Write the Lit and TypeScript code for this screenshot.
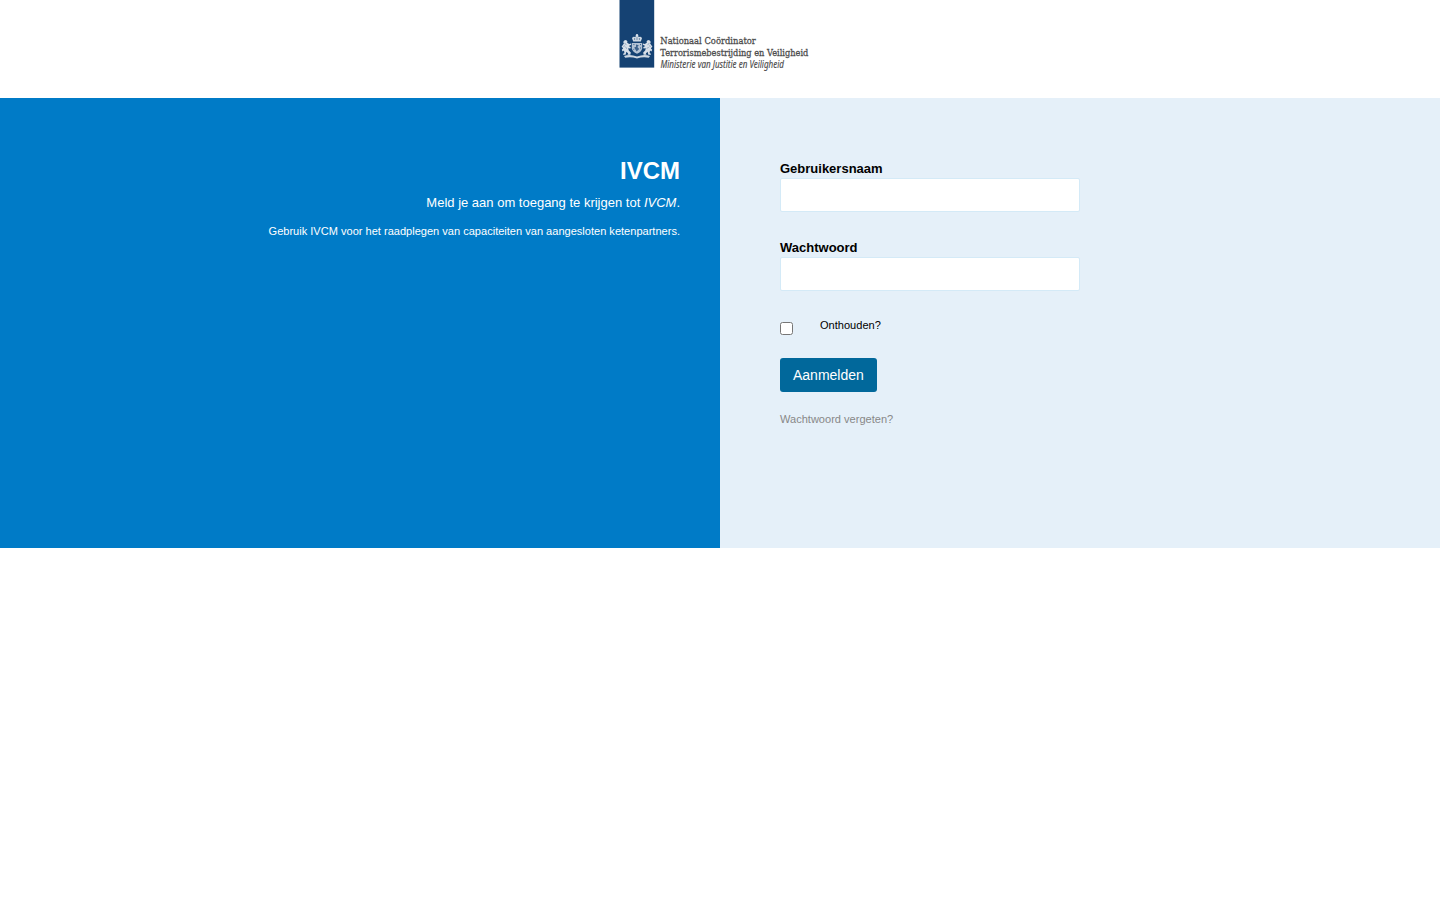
import { LitElement, html, css, svg } from "lit";
import { customElement } from "lit/decorators.js";

const lion = svg`
  <path d="M3.6 45.2 L4.9 43.6 L4.2 42 L5.2 40.6 L7 40 L8.4 41.2 L8.2 42.8 L10.2 44 L12 43.4 L12.2 44.8 L9.8 46 L11.8 47.2 L11.4 48.6 L9.2 48.2 L9.8 50.6 L11.8 52.6 L11.4 54.8 L8.4 54.8 L9.2 53.4 L7.4 51.8 L6.6 54.8 L4 54.8 L4.4 53.6 L5.4 53 L5 50.6 L3.6 51.6 L2.8 49.8 L4.2 48.2 L2.6 46.8 Z"
    fill="#eef2f6" fill-opacity=".9"/>
  <path d="M5.6 43.4 L7.4 44.6 M6.4 47 L8 48.6 M4.4 46.4 L5.8 45.8" stroke="#154273" stroke-width=".6" opacity=".7"/>`;

@customElement("ncv-logo")
export class NcvLogo extends LitElement {
  static styles = css`
    :host { display: block; width: 202px; height: 84px; }
    svg { display: block; overflow: visible; }
    text { font-family: "DejaVu Serif", serif; font-size: 9.8px; fill: #4c4c4c; stroke: #4c4c4c; stroke-width: .3px; }
    .ministry { font-family: "Noto Sans", sans-serif; font-size: 10px; font-style: italic; stroke-width: .15px; }
  `;
  render() {
    return html`<svg width="202" height="84" viewBox="0 0 202 84" role="img" aria-label="Nationaal Coördinator Terrorismebestrijding en Veiligheid">
      <rect x=".5" y="0" width="34.7" height="67.6" fill="#154273"/>
      <g>
        <circle cx="18" cy="35.2" r="1.2" fill="#dce3ec"/>
        <path d="M13 38.2 Q14 36.2 16 37 Q18 35 20 37 Q22 36.2 23 38.2 L21.8 41.6 H14.2 Z" fill="#eef2f6" fill-opacity=".85"/>
        <path d="M15.6 38 V40 M18 37.2 V40 M20.4 38 V40" stroke="#154273" stroke-width=".5"/>
        ${lion}
        <g transform="translate(36 0) scale(-1 1)">${lion}</g>
        <path d="M12.8 43 H23.2 V48.6 Q22.6 52 18 53.8 Q13.4 52 12.8 48.6 Z" fill="#dce4ed" fill-opacity=".8"/>
        <path d="M17 44.4 L19.8 45.2 L18.4 47 L20.2 49 L17.6 51.4 L16.4 49.4 L15.2 47.6 L17 46.8 Z" fill="#154273" fill-opacity=".75"/>
        <path d="M14.4 44.6 H15.4 M21 44.6 H22 M14.4 49.4 H15.2 M21 48 H22" stroke="#154273" stroke-width=".8"/>
        <path d="M5 56 Q11 53.6 18 56.6 Q25 53.6 31 56 L29.8 57.8 Q24 56.4 18 58.6 Q12 56.4 6.2 57.8 Z" fill="#eef2f6" fill-opacity=".85"/>
      </g>
      <text x="41.3" y="44.4" textLength="95.5" lengthAdjust="spacingAndGlyphs">Nationaal Coördinator</text>
      <text x="41.3" y="56.2" textLength="148" lengthAdjust="spacingAndGlyphs">Terrorismebestrijding en Veiligheid</text>
      <text class="ministry" x="41.5" y="68" textLength="123.5" lengthAdjust="spacingAndGlyphs">Ministerie van Justitie en Veiligheid</text>
    </svg>`;
  }
}

@customElement("app-root")
export class AppRoot extends LitElement {
  static styles = css`
    :host {
      display: block;
      min-height: 900px;
      background: #fff;
      font: 13px/20px "Liberation Sans", Arial, sans-serif;
      color: #000;
    }
    .header { display: flex; height: 98px; padding-left: 619px; box-sizing: border-box; }
    .main { display: grid; grid-template-columns: 1fr 1fr; height: 450px; }
    .intro { background: #007bc7; color: #fff; text-align: right; padding: 58px 40px 0; }
    h1 { margin: 0; font-size: 24px; line-height: 30px; font-weight: 700; }
    .lead { margin: 7px 0 9px; line-height: 20px; }
    .small { margin: 0; font-size: 11.05px; line-height: 18px; }
    .login { background: #e5f0f9; padding: 61px 60px 0; }
    .field { display: block; width: 300px; margin-bottom: 26px; }
    .label { display: block; height: 19px; line-height: 20px; font-weight: 700; }
    .input {
      display: block; box-sizing: border-box; width: 300px; height: 34px; margin: 0;
      padding: 6px 12px; border: 1px solid #d4eaf7; border-radius: 2px; background: #fff;
    }
    .remember { display: flex; align-items: flex-start; height: 41px; font-size: 11.05px; line-height: 16px; }
    .remember input { width: 13px; height: 13px; margin: 5px 27px 0 0; }
    .button {
      display: block; height: 34px; padding: 0 13px; border: 0; border-radius: 3px;
      background: #01689b; color: #fff; font: 14px/34px "Liberation Sans", Arial, sans-serif;
    }
    .forgot { display: inline-block; margin-top: 18px; font-size: 11.05px; line-height: 18px; color: #888; text-decoration: none; }
  `;
  render() {
    return html`
      <header class="header"><ncv-logo></ncv-logo></header>
      <main class="main">
        <section class="intro">
          <h1>IVCM</h1>
          <p class="lead">Meld je aan om toegang te krijgen tot <em>IVCM</em>.</p>
          <p class="small">Gebruik IVCM voor het raadplegen van capaciteiten van aangesloten ketenpartners.</p>
        </section>
        <form class="login">
          <label class="field"><span class="label">Gebruikersnaam</span><input class="input" type="text" /></label>
          <label class="field"><span class="label">Wachtwoord</span><input class="input" type="password" /></label>
          <label class="remember"><input type="checkbox" /><span>Onthouden?</span></label>
          <button class="button" type="button">Aanmelden</button>
          <a class="forgot" href="#">Wachtwoord vergeten?</a>
        </form>
      </main>`;
  }
}
